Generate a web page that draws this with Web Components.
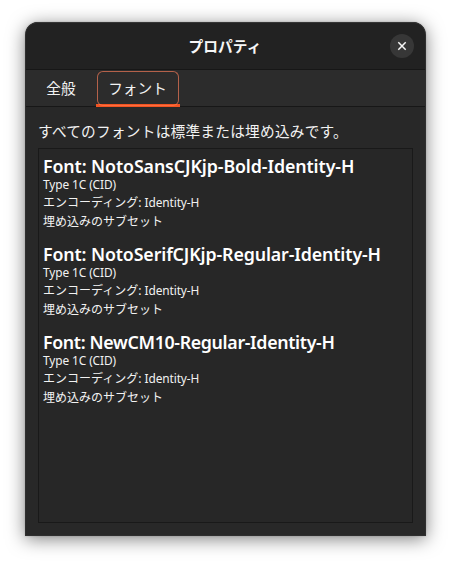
<!DOCTYPE html>
<html lang="ja">
<head>
<meta charset="utf-8">
<title>プロパティ</title>
<style>
body { margin: 0; background: #fff; font-family: "Noto Sans", "Noto Sans CJK JP", sans-serif; }
</style>
</head>
<body>
<properties-dialog></properties-dialog>
<script>
const define = (name, html) => customElements.define(name, class extends HTMLElement {
  constructor() {
    super();
    this.attachShadow({ mode: 'open' }).innerHTML = html;
  }
});

define('close-button', `
<style>
:host { display: block; width: 24px; height: 24px; border-radius: 50%; background: #373737; }
svg { display: block; }
</style>
<svg width="24" height="24" viewBox="0 0 24 24"><path d="M8.3 8.3l7.4 7.4M15.7 8.3l-7.4 7.4" stroke="#f7f7f7" stroke-width="1.5" fill="none"/></svg>`);

define('title-bar', `
<style>
:host { display: grid; grid-template-columns: 36px 1fr 35px; align-items: center; background: #222; border-top: 1px solid #363636; border-bottom: 1px solid #171717; box-sizing: border-box; height: 48px; color: #f7f7f7; }
.title { grid-column: 2; text-align: center; font: bold 14.67px/22px "Noto Sans CJK JP", sans-serif; letter-spacing: .1px; padding-right: 2px; }
</style>
<div class="title"><slot></slot></div><close-button></close-button>`);

define('tab-item', `
<style>
:host { display: block; box-sizing: border-box; width: 84px; height: 36px; font: 14.67px/22px "Noto Sans CJK JP", sans-serif; color: #f2f2f2; }
:host([short]) { width: 70px; }
.face { box-sizing: border-box; height: 35px; margin: 0 1px; border: 1px solid transparent; border-radius: 6px; text-align: center; padding-top: 5px; }
:host([active]) { background: linear-gradient(#f05423, #f05423) bottom / 100% 3px no-repeat; }
:host([active]) .face { border-color: #b4614a; border-bottom-color: #ff6c3c; padding-right: 1px; }
</style>
<div class="face"><slot></slot></div>`);

define('tab-bar', `
<style>
:host { display: flex; box-sizing: border-box; height: 37px; padding: 1px 0 0; background: #2c2c2c; border-bottom: 1px solid #171717; }
</style>
<slot></slot>`);

define('font-entry', `
<style>
:host { display: block; height: 88px; color: #f2f2f2; font-size: 12px; }
h2 { margin: 0; font-size: 17.8px; line-height: 22px; font-weight: 600; color: #fff; white-space: nowrap; padding-top: 6px; letter-spacing: var(--tracking, 0); }
p { margin: 0; line-height: 18px; white-space: nowrap; }
.type { line-height: 15px; }
.enc { padding-top: 1px; }
.sub { line-height: 19px; }
.latin { font-size: 11.9px; letter-spacing: -.1px; }
</style>
<h2><slot></slot></h2>
<p class="type latin">Type 1C (CID)</p>
<p class="enc">エンコーディング: <span class="latin">Identity-H</span></p>
<p class="sub">埋め込みのサブセット</p>`);

define('font-list', `
<style>
:host { display: block; box-sizing: border-box; width: 375px; height: 375px; border: 1px solid #191919; background: #272727; padding-left: 4px; }
</style>
<slot></slot>`);

define('properties-dialog', `
<style>
:host { display: block; box-sizing: border-box; height: 564px; padding: 22px 25px; overflow: hidden; }
.window { box-sizing: border-box; width: 401px; height: 514px; background: #282828; border: 1px solid #2f2f2f; border-top: 0; border-radius: 13px 13px 0 0; box-shadow: 0 3px 18px rgba(0,0,0,.5), 0 0 2px rgba(0,0,0,.2); }
title-bar { border-radius: 12px 12px 0 0; }
.content { padding: 0 12px; }
.summary { height: 41px; box-sizing: border-box; padding-top: 13px; font: 14.67px/22px "Noto Sans CJK JP", sans-serif; letter-spacing: .25px; color: #f2f2f2; white-space: nowrap; }
.sans { --tracking: -.1px; }
.serif { --tracking: -.12px; }
.cm { --tracking: -.34px; }
</style>
<div class="window">
<title-bar>プロパティ</title-bar>
<tab-bar><tab-item short>全般</tab-item><tab-item active>フォント</tab-item></tab-bar>
<div class="content">
<div class="summary">すべてのフォントは標準または埋め込みです。</div>
<font-list>
<font-entry class="sans">Font: NotoSansCJKjp-Bold-Identity-H</font-entry>
<font-entry class="serif">Font: NotoSerifCJKjp-Regular-Identity-H</font-entry>
<font-entry class="cm">Font: NewCM10-Regular-Identity-H</font-entry>
</font-list>
</div>
</div>`);
</script>
</body>
</html>
